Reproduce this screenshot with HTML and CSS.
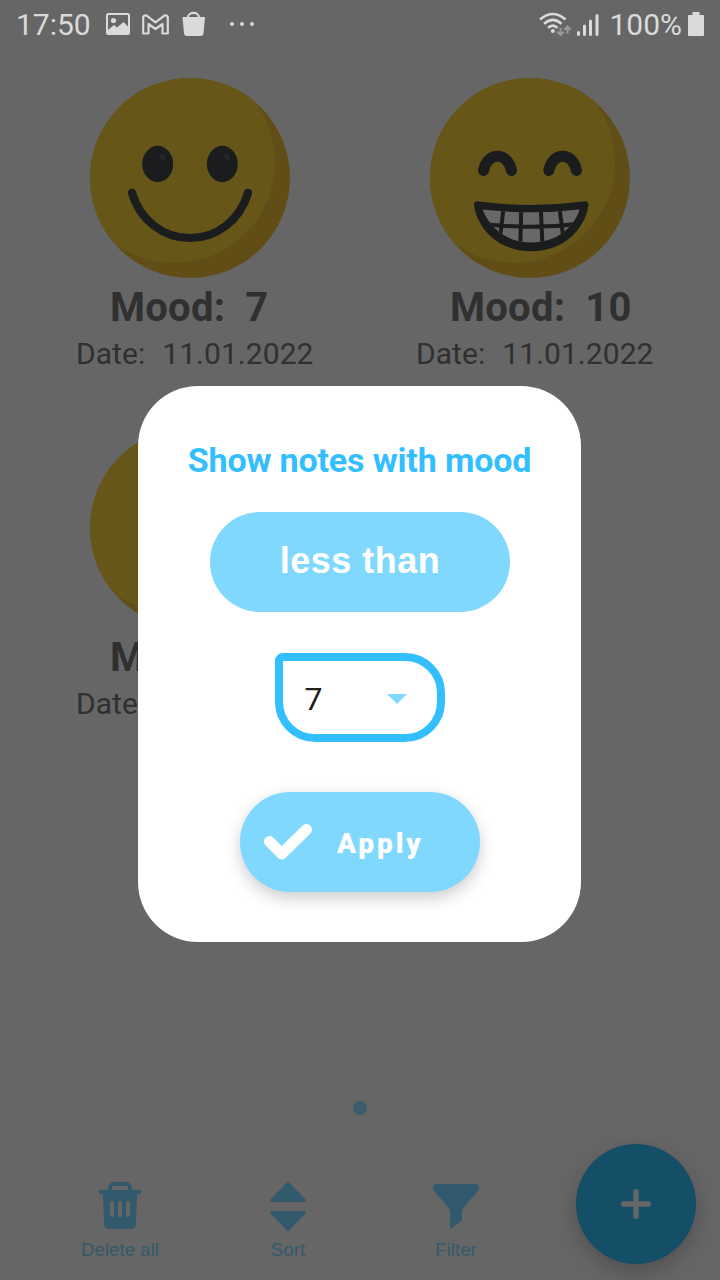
FILE: index.html
```html
<!DOCTYPE html>
<html lang="en">
<head>
<meta charset="utf-8">
<title>Mood notes</title>
<link rel="stylesheet" href="styles.css">
</head>
<body>
<svg class="defs" width="0" height="0" aria-hidden="true">
  <defs>
    <clipPath id="face-clip"><circle cx="100" cy="100" r="100"/></clipPath>
    <g id="face">
      <circle cx="100" cy="100" r="100" fill="#614e17"/>
      <circle cx="84" cy="84" r="101" fill="#665719" clip-path="url(#face-clip)"/>
    </g>
    <g id="smile">
      <g fill="#1a1c1d"><ellipse cx="67.700" cy="86" rx="15.500" ry="18.200"/><ellipse cx="132.300" cy="86" rx="15.500" ry="18.200"/></g>
      <g fill="#25282a"><ellipse cx="72.300" cy="79" rx="2.800" ry="3.500" transform="rotate(-35 72.300 79)"/><ellipse cx="136.900" cy="79" rx="2.800" ry="3.500" transform="rotate(-35 136.900 79)"/></g>
      <path d="M42 115C50 142 73 160 100 160S150 142 158 115" fill="none" stroke="#1a1c1d" stroke-width="8.200" stroke-linecap="round"/>
    </g>
  </defs>
</svg>
<div class="screen">
  <header class="status">
    <span class="status-text">17:50</span>
    <svg class="ic-photo" width="24" height="22" viewBox="0 0 24 22"><rect x="1" y="1" width="22" height="20" rx="1.500" fill="none" stroke="#dadada" stroke-width="2"/><circle cx="7.500" cy="7.500" r="2.600" fill="#dadada"/><path d="M2 17L8 12L11 14.500L17.500 9L22.500 14V21H2Z" fill="#dadada"/></svg>
    <svg class="ic-mail" width="27" height="21" viewBox="0 0 27 21"><path d="M1.200 3.500Q1.500 1 4.300 1.300L13.500 8.300L22.700 1.300Q25.500 1 25.800 3.500V19.500H20.500V10L13.500 15L6.500 10V19.500H1.200Z" fill="none" stroke="#dadada" stroke-width="2.200" stroke-linejoin="round"/></svg>
    <svg class="ic-bag" width="24" height="26" viewBox="0 0 24 26"><path d="M6 8V6.500C6 .4 17 .4 17 6.500V8" fill="none" stroke="#dadada" stroke-width="2.200"/><path d="M.5 6H23L21.500 22.500Q21 25 18.500 25H5Q2.500 25 2 22.500Z" fill="#dadada"/></svg>
    <svg class="ic-more" width="26" height="6" viewBox="0 0 26 6" fill="#dadada"><circle cx="3" cy="3" r="2"/><circle cx="13" cy="3" r="2"/><circle cx="23" cy="3" r="2"/></svg>
    <span class="spacer"></span>
    <svg class="ic-wifi" width="33" height="26" viewBox="0 0 33 26" fill="none"><g stroke="#dadada" stroke-width="2.500"><path d="M1 7.500Q13.800-3.500 26.500 7.500"/><path d="M5 11.800Q13.800 4 22.500 11.800"/><path d="M9 15.800Q13.800 11.500 18.500 15.800"/></g><circle cx="13.800" cy="19" r="2" fill="#dadada"/><g stroke="#999" stroke-width="2"><path d="M21.500 16V23M18.300 19.700L21.500 23L24.700 19.700M28.500 21.500V14.500M25.300 17.800L28.500 14.500L31.700 17.800"/></g></svg>
    <svg class="ic-signal" width="22" height="23" viewBox="0 0 22 23"><path d="M1.500 18.500V20.500M7.500 12V20.500M13.500 7V20.500M20 1.500V20.500" stroke="#dadada" stroke-width="3" stroke-linecap="round"/></svg>
    <span class="status-text percent">100%</span>
    <svg class="ic-battery" width="16" height="24" viewBox="0 0 16 24"><path d="M4.500 0H11.500V3H15Q16 3 16 4V23Q16 24 15 24H1Q0 24 0 23V4Q0 3 1 3H4.500Z" fill="#dadada"/></svg>
  </header>

  <main class="notes">
    <article class="note">
      <svg class="face" viewBox="0 0 200 200"><use href="#face"/><use href="#smile"/></svg>
      <p class="mood"><span>Mood:</span><span>7</span></p>
      <p class="date"><span>Date:</span><span>11.01.2022</span></p>
    </article>
    <article class="note">
      <svg class="face" viewBox="0 0 200 200"><use href="#face"/>
        <path d="M53.500 92.500C57.500 73.500 77.500 73.500 81.500 92.500M118.800 92.500C122.800 73.500 142.500 73.500 146.500 92.500" fill="none" stroke="#1a1c1d" stroke-width="11" stroke-linecap="round"/>
        <path d="M44 126.500Q44 122.500 49 123.500Q101 130.500 153 123.500Q158.500 122.500 158.500 127C155 151 134 173.300 101.300 173.300S47 151 44 126.500Z" fill="#1a1c1d"/>
        <clipPath id="mouth"><path d="M52.500 131.500Q101 137 149.500 131.500C144 150 126 164.500 101.300 164.500S60 150 52.500 131.500Z"/></clipPath>
        <g clip-path="url(#mouth)"><rect x="50" y="128" width="105" height="40" fill="#686868"/><path d="M50 145.500Q101 152 153 145.500M73.500 130L69.500 165M91.200 130L90.300 168M110.800 130L112.500 168M129.500 130L134 165" stroke="#1a1c1d" stroke-width="4" fill="none"/></g>
      </svg>
      <p class="mood"><span>Mood:</span><span>10</span></p>
      <p class="date"><span>Date:</span><span>11.01.2022</span></p>
    </article>
    <article class="note">
      <svg class="face" viewBox="0 0 200 200"><use href="#face"/></svg>
      <p class="mood"><span>Mood:</span></p>
      <p class="date"><span>Date:</span></p>
    </article>
  </main>

  <div class="pager"></div>
  <footer class="toolbar">
    <div class="tool">
      <svg width="48" height="56" viewBox="0 0 48 56"><path d="M14 14V12.500Q14 8 18 8H30Q34 8 34 12.500V14" fill="none" stroke="#335a6c" stroke-width="4"/><path d="M3 14H45V18H41L40 48Q39.700 53 34.500 53H13.500Q8.500 53 8 48L7 18H3Z" fill="#335a6c"/><path d="M16 27V39M24 27V39M32 27V39" stroke="#666" stroke-width="4" stroke-linecap="round"/></svg>
      <span>Delete all</span>
    </div>
    <div class="tool">
      <svg width="48" height="56" viewBox="0 0 48 56" fill="#335a6c" stroke="#335a6c" stroke-width="2" stroke-linejoin="round"><path d="M24 7L41 24.500V25H7V24.500ZM7 36H41V36.500L24 54L7 36.500Z"/></svg>
      <span>Sort</span>
    </div>
    <div class="tool">
      <svg width="48" height="56" viewBox="0 0 48 56" fill="#335a6c"><path d="M4.500 8H43.500Q47 8 47 11.500V13.500L30 34V44.500L20.500 52Q18 53.500 18 51V34L1 13.500V11.500Q1 8 4.500 8Z"/></svg>
      <span>Filter</span>
    </div>
    <button class="fab" aria-label="Add note"><svg width="30" height="30" viewBox="0 0 30 30"><path d="M15 2.800V27.200M2.800 15H27.200" stroke="#666" stroke-width="5.400" stroke-linecap="round"/></svg></button>
  </footer>

  <section class="dialog">
    <h1 class="title">Show notes with mood</h1>
    <button class="compare">less than</button>
    <div class="select"><span>7</span><svg width="20" height="10" viewBox="0 0 20 10"><path d="M0 0H20L10 10Z" fill="#80d8ff"/></svg></div>
    <button class="apply"><svg width="48" height="36" viewBox="0 0 48 36"><path d="M5.500 17.500L17.700 30L42.500 5.500" fill="none" stroke="#fff" stroke-width="11" stroke-linecap="round" stroke-linejoin="round"/></svg><span>Apply</span></button>
  </section>
</div>
</body>
</html>
```
FILE: styles.css
```css
* { box-sizing: border-box; }
body { margin: 0; }
p, h1 { margin: 0; }
button { border: 0; padding: 0; font: inherit; }
svg { display: block; flex: none; }
.defs { position: absolute; }
.screen {
  position: relative;
  display: flex;
  flex-direction: column;
  width: 720px;
  height: 1280px;
  overflow: hidden;
  background: #666;
  font-family: Roboto, sans-serif;
}
.status {
  display: flex;
  align-items: center;
  flex: none;
  height: 48px;
  padding: 0 16px;
}
.status-text { padding-top: 1px; font-size: 30px; line-height: 48px; color: #dadada; white-space: nowrap; }
.ic-photo { margin-left: 15px; }
.ic-mail { margin-left: 12px; }
.ic-bag { margin-left: 13px; }
.ic-more { margin-left: 23px; }
.spacer { flex: 1; }
.ic-wifi { margin-top: 2px; }
.ic-signal { margin-left: 5px; margin-top: 2px; margin-right: 1px; }
.percent { margin-left: 9px; }
.ic-battery { margin-left: 6px; }
.notes {
  display: grid;
  grid-template-columns: 340px 340px;
  grid-auto-rows: 350px;
  flex: none;
  padding: 30px 20px 0;
}
.note { display: flex; flex-direction: column; }
.face { width: 200px; height: 200px; margin-left: 70px; }
.mood, .date { display: flex; white-space: nowrap; color: #303030; }
.mood { margin: 6px 0 0 90px; font-size: 40px; line-height: 48px; font-weight: 700; letter-spacing: .25px; gap: 20px; }
.date { margin: 1px 0 0 56px; font-size: 30px; line-height: 42px; letter-spacing: .05px; gap: 17px; }
.pager { flex: none; width: 14px; height: 14px; border-radius: 50%; margin: 323px auto 0; background: #335a6c; opacity: .85; }
.toolbar { display: flex; flex: none; height: 165px; padding: 29px 0 0 36px; }
.tool { display: flex; flex-direction: column; align-items: center; width: 168px; padding-top: 32px; font: 18.700px/24px "Liberation Sans", sans-serif; color: #335a6c; }
.tool span { margin-top: 6px; }
.fab { display: grid; place-items: center; flex: none; width: 120px; height: 120px; margin-left: 36px; border-radius: 50%; background: #144f67; box-shadow: 0 8px 22px rgba(0, 0, 0, .22); }
.dialog {
  position: absolute;
  left: 138px;
  top: 386px;
  display: flex;
  flex-direction: column;
  align-items: center;
  width: 443px;
  height: 556px;
  padding-top: 50px;
  border-radius: 60px;
  background: #fff;
}
.title { font-size: 34px; line-height: 48px; font-weight: 700; letter-spacing: -.15px; color: #33bfff; white-space: nowrap; }
.compare { width: 300px; height: 100px; margin-top: 28px; padding: 0 0 2px 1px; border-radius: 50px; background: #80d8ff; color: #fff; font: 700 36px/98px "Liberation Sans", sans-serif; letter-spacing: .5px; }
.select { display: flex; align-items: center; justify-content: space-between; width: 170px; height: 89px; margin-top: 41px; padding: 2px 30px 0 22px; border: 8px solid #33bfff; border-radius: 8px 40px 40px 40px; font-size: 32px; color: #212121; }
.apply { display: flex; align-items: center; width: 240px; height: 100px; margin-top: 50px; padding-left: 24px; border-radius: 50px; background: #80d8ff; box-shadow: 0 6px 16px rgba(0, 0, 0, .2); color: #fff; font-size: 28px; font-weight: 900; letter-spacing: 2.9px; }
.apply span { margin-left: 25.500px; margin-top: 2px; }
```
